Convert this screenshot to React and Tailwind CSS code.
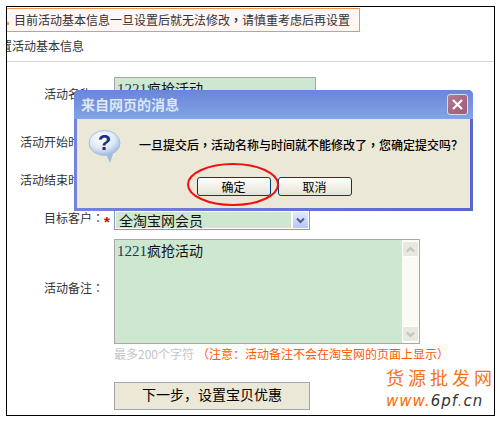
function Colon() {
  return <span className="font-['Noto_Sans_CJK_TC',sans-serif]">：</span>;
}

function Comma() {
  return <span className="font-['Noto_Sans_CJK_TC',sans-serif] font-bold">，</span>;
}

function Row({ label }) {
  return (
    <div className="flex items-center h-[38px]">
      <div className="w-[97px] shrink-0 text-right text-[12px] text-[#333]">{label}<Colon /></div>
    </div>
  );
}

function BoxText({ children }) {
  return (
    <span className="block text-[14px] text-[#111] leading-[18px]">
      <span className="text-[15px] leading-[18px] text-[#173a5e] font-['Liberation_Serif',serif]">1221</span>{children}
    </span>
  );
}

function Question() {
  return (
    <svg width="33" height="33" viewBox="0 0 33 33" className="shrink-0">
      <defs>
        <radialGradient id="q" cx="0.42" cy="0.32" r="0.8">
          <stop offset="0" stopColor="#ffffff" />
          <stop offset="0.5" stopColor="#dfeaf7" />
          <stop offset="1" stopColor="#82aad4" />
        </radialGradient>
      </defs>
      <path d="M17 22 L25 24 L22 33 Z" fill="#9fbcdb" />
      <ellipse cx="16.5" cy="13" rx="15.5" ry="12.5" fill="url(#q)" stroke="#a8c0da" />
      <text x="16.5" y="20" textAnchor="middle" fontSize="22" fontWeight="700" fill="#17307f" className="font-['Liberation_Sans',sans-serif]">?</text>
    </svg>
  );
}

function DlgButton({ children }) {
  return (
    <div className="w-[74px] h-[19px] flex items-center justify-center rounded-[3px] border border-[#003c74] bg-gradient-to-b from-white to-[#e6e3d4] text-[12px] text-black">{children}</div>
  );
}

export default function App() {
  return (
    <div className="relative w-[501px] h-[422px] bg-white overflow-hidden font-['Noto_Sans_CJK_SC','Liberation_Sans',sans-serif]">
      <div className="absolute left-[6px] top-[6px] w-[489px] h-[410px] border border-black pointer-events-none z-10" />
      <div className="ml-[7px] w-[487px] pt-[2px] overflow-hidden">
        <div className="h-[6px]" />
        <div className="w-[353px] h-[24px] border border-l-0 border-[#f79646] bg-[#fff6f5] flex items-center text-[12px] text-[#333]">
          <span className="w-[2px] h-[3px] bg-[#f79646] mt-[6px] mr-[5px]" />
          目前活动基本信息一旦设置后就无法修改<Comma />请慎重考虑后再设置
        </div>
        <div className="h-[29px] flex items-center text-[12px] text-[#333] whitespace-nowrap -ml-[7px] pb-[2px]">
          置活动基本信息
        </div>
        <div className="h-[1px] bg-[#d4d4d4]" />
        <div className="pt-[15px]">
          <div className="flex h-[46px] items-start">
            <div className="w-[97px] shrink-0 text-right text-[12px] text-[#333] pt-[8px]">活动名称<Colon /></div>
            <div className="ml-[10px] w-[202px] h-[40px] border border-[#a8a8a8] bg-[#cde8cf] px-[2px] pt-[1px]"><BoxText>疯抢活动</BoxText></div>
          </div>
          <Row label="活动开始时间" />
          <Row label="活动结束时间" />
          <div className="flex h-[31px] items-end">
            <div className="w-[97px] shrink-0 text-right text-[12px] text-[#333] pb-[3px]">目标客户<Colon /></div>
            <div className="w-[10px] h-[20px] text-[15px] leading-[24px] font-bold text-[#e00000] font-['Liberation_Sans',sans-serif]">*</div>
            <div className="w-[196px] h-[20px] border border-[#7f9db9] flex items-center p-[1px]">
              <div className="flex-1 h-full bg-[#cde8cf] text-[14px] text-[#111] leading-[16px] pl-[3px]">全淘宝网会员</div>
              <div className="w-[15px] h-full ml-[2px] bg-gradient-to-b from-[#e1eaff] to-[#b4c8f5] flex items-center justify-center">
                <svg width="9" height="7" viewBox="0 0 9 7"><path d="M1 1.5 L4.5 5 L8 1.5" fill="none" stroke="#4d6185" strokeWidth="2" /></svg>
              </div>
            </div>
          </div>
          <div className="flex mt-[9px]">
            <div className="w-[97px] shrink-0 flex items-center justify-end text-[12px] text-[#333] h-[105px] pb-[7px]">活动备注<Colon /></div>
            <div className="ml-[10px] w-[306px] h-[105px] border border-[#a8a8a8] flex">
              <div className="flex-1 bg-[#cde8cf] px-[2px] pt-[1px]"><BoxText>疯抢活动</BoxText></div>
              <div className="w-[17px] bg-[#fbfbf6] flex flex-col justify-between py-[1px]">
                <div className="h-[16px] rounded-[2px] bg-[#e9e8df] border border-white flex items-center justify-center">
                  <svg width="9" height="7" viewBox="0 0 9 7"><path d="M1 5.5 L4.5 2 L8 5.5" fill="none" stroke="#c2c2b8" strokeWidth="2" /></svg>
                </div>
                <div className="h-[16px] rounded-[2px] bg-[#e9e8df] border border-white flex items-center justify-center">
                  <svg width="9" height="7" viewBox="0 0 9 7"><path d="M1 1.5 L4.5 5 L8 1.5" fill="none" stroke="#c2c2b8" strokeWidth="2" /></svg>
                </div>
              </div>
            </div>
          </div>
          <div className="ml-[107px] h-[20px] flex items-center text-[12px] text-[#c4c4c4] whitespace-nowrap">
            最多200个字符<span className="text-[#ff5a00] ml-[3px]">（注意：活动备注不会在淘宝网的页面上显示）</span>
          </div>
          <div className="ml-[107px] mt-[18px] w-[196px] h-[28px] border border-[#a8a8a8] bg-[#ebe8d8] flex items-center justify-center text-[14px] text-black pb-[3px]">
            下一步，设置宝贝优惠
          </div>
        </div>
      </div>

      {/* modal dialog */}
      <div className="absolute left-[74px] top-[90px] w-[399px] h-[121px] z-20 rounded-t-[5px] bg-gradient-to-r from-[#7482da] to-[#5a66cc] p-[3px] pt-0 flex flex-col">
        <div className="h-[29px] -mx-[3px] rounded-t-[5px] bg-gradient-to-b from-[#6a86dc] via-[#7694de] to-[#7fa6e6] flex items-center justify-between pl-[7px] pr-[5px]">
          <span className="text-[14px] font-bold text-[#dfe6f8]">来自网页的消息</span>
          <div className="w-[21px] h-[21px] rounded-[3px] border border-[#d8dcf0] bg-gradient-to-br from-[#b27a92] to-[#a05a70] flex items-center justify-center">
            <svg width="13" height="13" viewBox="0 0 13 13"><path d="M2 2 L11 11 M11 2 L2 11" stroke="#fff" strokeWidth="2.2" /></svg>
          </div>
        </div>
        <div className="flex-1 bg-[#ebe8d8] flex flex-col">
          <div className="flex items-start pl-[11px] pt-[11px] h-[58px]">
            <Question />
            <span className="ml-[18px] mt-[6px] text-[12px] text-black whitespace-nowrap font-medium">一旦提交后<Comma />活动名称与时间就不能修改了<Comma />您确定提交吗？</span>
          </div>
          <div className="flex justify-center gap-[7px] ml-[1px]">
            <DlgButton>确定</DlgButton>
            <DlgButton>取消</DlgButton>
          </div>
        </div>
      </div>

      {/* hand-drawn ellipse */}
      <svg className="absolute left-[185px] top-[161px] z-30" width="96" height="48" viewBox="0 0 96 48">
        <ellipse cx="48" cy="23.5" rx="45" ry="20.5" fill="none" stroke="#ee1111" strokeWidth="2" />
      </svg>

      {/* watermark */}
      <div className="absolute left-[386px] top-[365px] z-30 w-[108px] whitespace-nowrap">
        <div className="text-[18px] leading-[24px] text-[#f97316] tracking-[4px]">货源批发网</div>
        <div className="text-[15px] leading-[18px] italic tracking-[1px] text-[#ff6a00] mt-[3px] font-['DejaVu_Sans',sans-serif]">
          www.<span className="text-[#333]">6pf</span>.<span className="text-[#333]">cn</span>
        </div>
      </div>
    </div>
  );
}
